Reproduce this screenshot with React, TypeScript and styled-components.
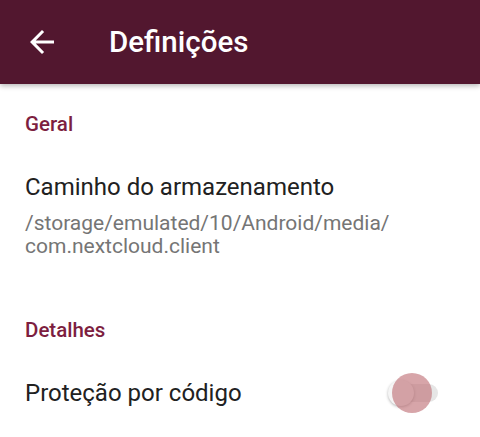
import React from "react";
import styled, { createGlobalStyle } from "styled-components";

const Global = createGlobalStyle`
  html, body { margin: 0; padding: 0; background: #ffffff; }
  body { font-family: Roboto, "Noto Sans", sans-serif; overflow: hidden; }
`;

const Page = styled.div`
  width: 480px;
  height: 437px;
  background: #ffffff;
  overflow: hidden;
`;

const Toolbar = styled.header`
  height: 84px;
  background: #52172f;
  display: flex;
  align-items: center;
  box-shadow: 0 2px 5px rgba(0, 0, 0, 0.28);
  position: relative;
  z-index: 1;
`;

const BackButton = styled.div`
  width: 36px;
  height: 36px;
  margin-left: 24px;
  margin-right: 49px;
  display: flex;
  align-items: center;
  justify-content: center;
`;

const Title = styled.h1`
  margin: 0;
  color: #ffffff;
  font-size: 29.5px;
  font-weight: 500;
  line-height: 36px;
`;

const Content = styled.main`
  padding: 0 25px;
`;

const Category = styled.div<{ $top: number }>`
  padding-top: ${(p) => p.$top}px;
  color: #7d1e40;
  font-size: 20.5px;
  font-weight: 500;
  line-height: 26px;
`;

const Item = styled.div<{ $top: number }>`
  padding-top: ${(p) => p.$top}px;
  display: flex;
  align-items: center;
  justify-content: space-between;
`;

const ItemText = styled.div`
  display: flex;
  flex-direction: column;
`;

const ItemTitle = styled.div`
  color: #212121;
  font-size: 24px;
  line-height: 30px;
`;

const ItemSummary = styled.div`
  color: #757575;
  font-size: 21px;
  line-height: 23px;
  margin-top: 10px;
`;

const SwitchWrap = styled.div`
  position: relative;
  width: 52px;
  height: 28px;
  margin-right: 15px;
  display: flex;
  align-items: center;
`;

const Track = styled.div`
  width: 46px;
  height: 18px;
  border-radius: 9px;
  background: #e6e6e6;
  margin-left: 4px;
`;

const Thumb = styled.div`
  position: absolute;
  left: 0;
  top: 1px;
  width: 26px;
  height: 26px;
  border-radius: 50%;
  background: #f5f5f5;
  box-shadow: 0 1px 3px rgba(0, 0, 0, 0.3);
`;

const Ripple = styled.div`
  position: absolute;
  left: 4px;
  top: -6px;
  width: 40px;
  height: 40px;
  border-radius: 50%;
  background: rgba(190, 110, 116, 0.62);
`;

export default function App() {
  return (
    <Page>
      <Global />
      <Toolbar>
        <BackButton>
          <svg width="36" height="36" viewBox="0 0 24 24">
            <path
              d="M20 11H7.83l5.59-5.59L12 4l-8 8 8 8 1.41-1.41L7.83 13H20v-2z"
              fill="#ffffff"
            />
          </svg>
        </BackButton>
        <Title>Definições</Title>
      </Toolbar>
      <Content>
        <Category $top={27}>Geral</Category>
        <Item $top={35}>
          <ItemText>
            <ItemTitle>Caminho do armazenamento</ItemTitle>
            <ItemSummary>
              /storage/emulated/10/Android/media/
              <br />
              com.nextcloud.client
            </ItemSummary>
          </ItemText>
        </Item>
        <Category $top={59}>Detalhes</Category>
        <Item $top={35}>
          <ItemText>
            <ItemTitle>Proteção por código</ItemTitle>
          </ItemText>
          <SwitchWrap>
            <Track />
            <Thumb />
            <Ripple />
          </SwitchWrap>
        </Item>
      </Content>
    </Page>
  );
}
